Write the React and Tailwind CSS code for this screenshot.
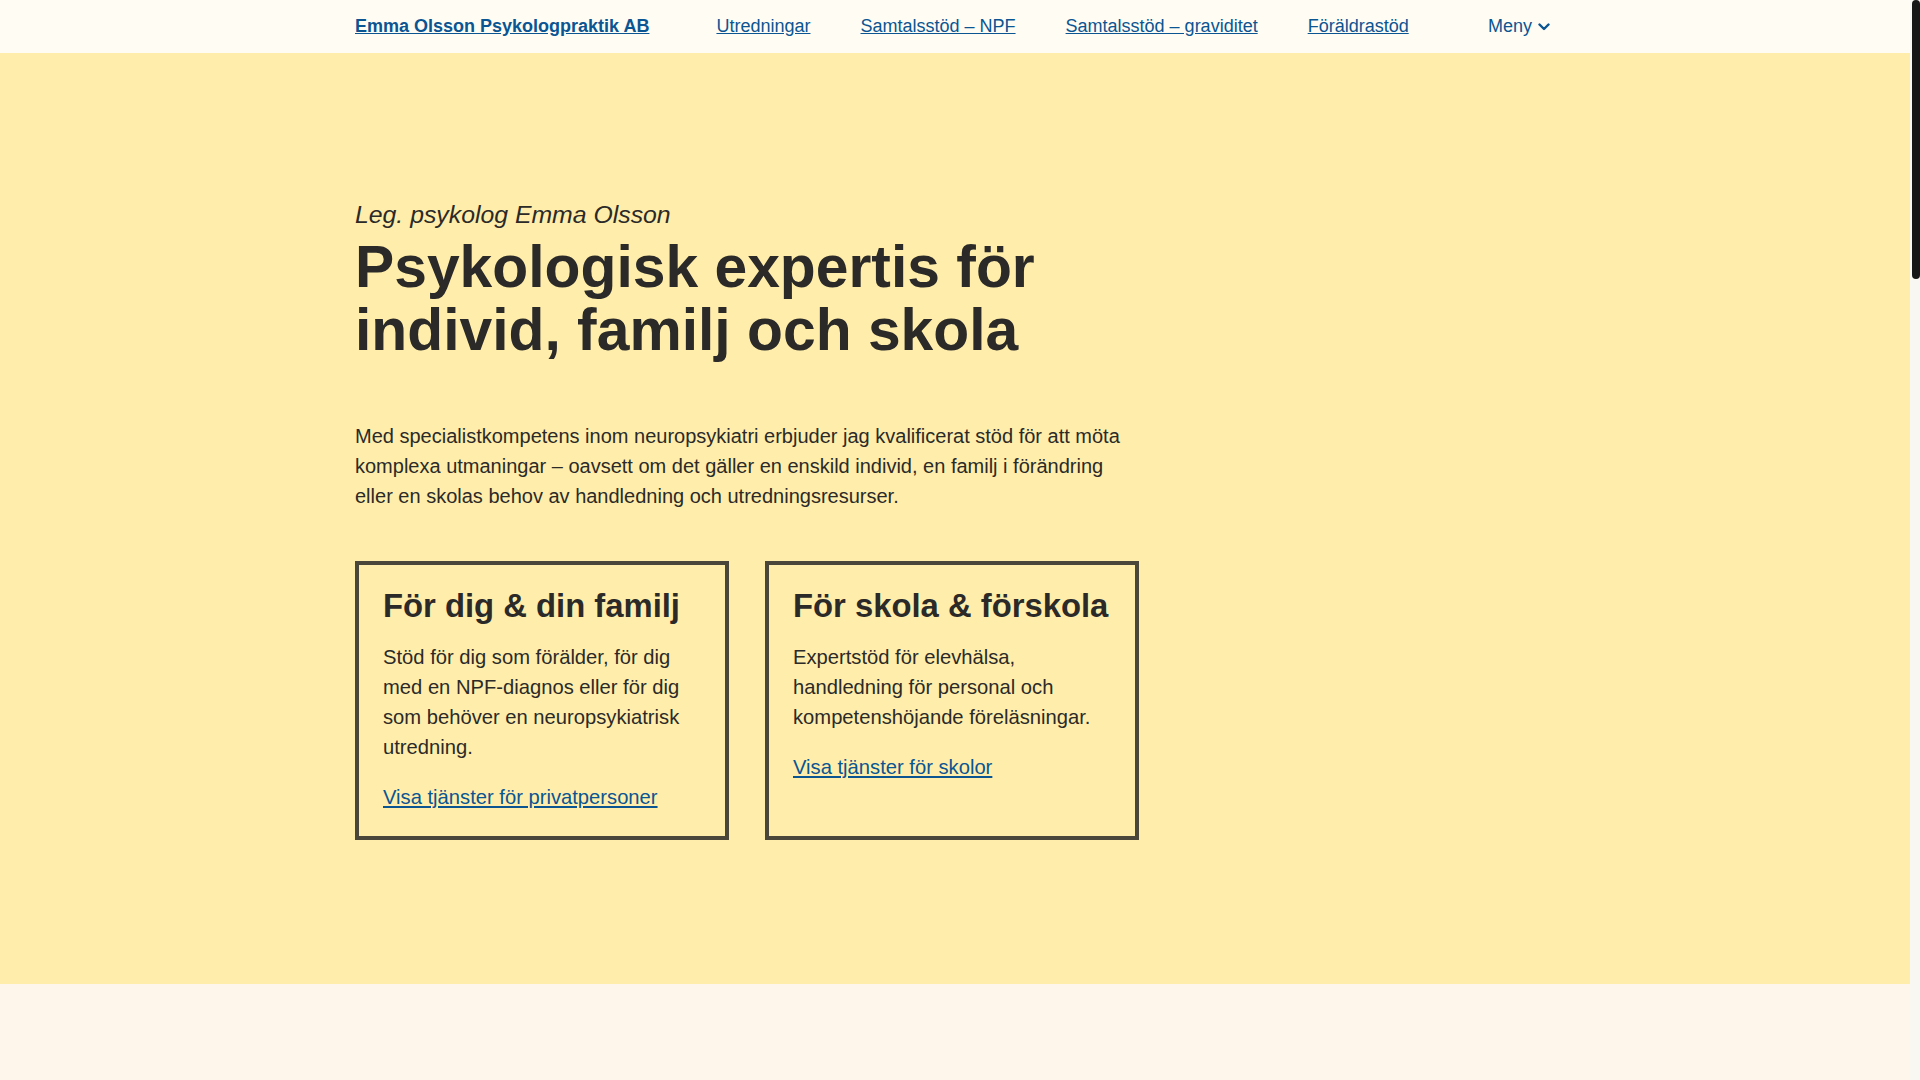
import React from "react";

const navLinks = [
  "Utredningar",
  "Samtalsstöd – NPF",
  "Samtalsstöd – graviditet",
  "Föräldrastöd",
];

const cards = [
  {
    title: "För dig & din familj",
    text: "Stöd för dig som förälder, för dig med en NPF-diagnos eller för dig som behöver en neuropsykiatrisk utredning.",
    link: "Visa tjänster för privatpersoner",
  },
  {
    title: "För skola & förskola",
    text: "Expertstöd för elevhälsa, handledning för personal och kompetenshöjande föreläsningar.",
    link: "Visa tjänster för skolor",
  },
];

const ChevronDown = () => (
  <svg width="12" height="8" viewBox="0 0 12 8" fill="none" aria-hidden="true">
    <path
      d="M1.5 1.5 L6 6 L10.5 1.5"
      stroke="currentColor"
      strokeWidth="2.4"
      strokeLinecap="round"
      strokeLinejoin="round"
    />
  </svg>
);

const Card = ({ title, text, link }) => (
  <div className="border-4 border-[#4a4639] px-6 pt-[21px] pb-6">
    <h2 className="mb-[17px] text-[32.8px] font-bold leading-[39px]">{title}</h2>
    <p className="text-[20.2px] leading-[30px]">{text}</p>
    <p className="mt-[20px] text-[20.2px] leading-[30px]">
      <a href="#" className="text-[#0a5592] underline">
        {link}
      </a>
    </p>
  </div>
);

export default function App() {
  return (
    <div className="flex h-screen overflow-hidden font-['Liberation_Sans',Arial,sans-serif] text-[#2b2a28]">
      <main className="flex flex-1 flex-col bg-[#fef6ea]">
        <header className="bg-[#fffcf4] pr-[5px]">
          <nav className="mx-auto flex h-[53px] w-[1195px] items-center text-[18px]">
            <a href="#" className="font-bold text-[#0a5592] underline">
              Emma Olsson Psykologpraktik AB
            </a>
            <ul className="ml-[67px] flex gap-[50px]">
              {navLinks.map((item) => (
                <li key={item}>
                  <a href="#" className="text-[#0a5592] underline">
                    {item}
                  </a>
                </li>
              ))}
            </ul>
            <button
              type="button"
              className="ml-auto flex items-center gap-[6px] text-[#0a5592]"
            >
              Meny
              <ChevronDown />
            </button>
          </nav>
        </header>

        <section className="bg-[#ffeeab] pt-[147px] pr-[5px] pb-[144px]">
          <div className="mx-auto w-[1195px]">
            <div className="w-[784px]">
              <p className="text-[24.8px] italic leading-[30px]">
                Leg. psykolog Emma Olsson
              </p>
              <h1 className="mt-[5px] text-[58.8px] font-bold leading-[63px]">
                Psykologisk expertis för individ, familj och skola
              </h1>
              <p className="mt-[60px] text-[20px] leading-[30px]">
                Med specialistkompetens inom neuropsykiatri erbjuder jag
                kvalificerat stöd för att möta komplexa utmaningar – oavsett om
                det gäller en enskild individ, en familj i förändring eller en
                skolas behov av handledning och utredningsresurser.
              </p>
              <div className="mt-[50px] grid grid-cols-2 gap-[36px]">
                {cards.map((card) => (
                  <Card key={card.title} {...card} />
                ))}
              </div>
            </div>
          </div>
        </section>

        <section className="flex-1" />
      </main>

      {/* scrollbar as seen in the screenshot */}
      <aside className="flex w-[10px] justify-end bg-[#f9f7f2]">
        <div className="h-[279px] w-[8px] rounded-full bg-[#161616]" />
      </aside>
    </div>
  );
}
